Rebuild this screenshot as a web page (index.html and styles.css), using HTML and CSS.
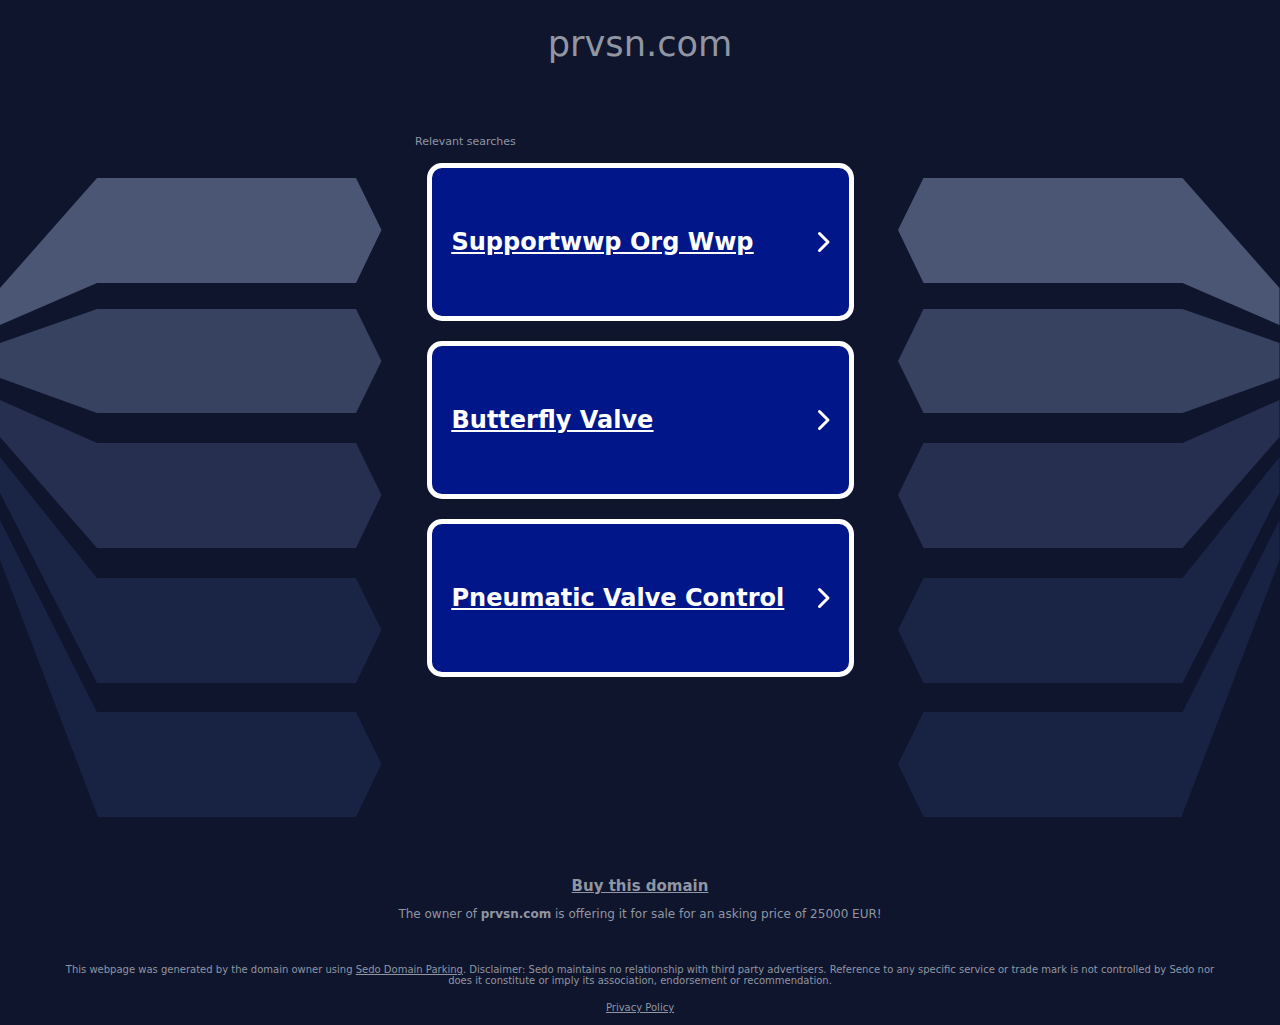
FILE: index.html
```html
<!DOCTYPE html>
<html lang="en">
<head>
  <meta charset="UTF-8" />
  <meta name="viewport" content="width=device-width, initial-scale=1.0" />
  <title>prvsn.com</title>
  <link rel="stylesheet" href="styles.css">
</head>
<body>
  <!-- background shapes -->
  <svg class="backdrop" viewBox="0 0 1280 1025" aria-hidden="true">
    <defs>
      <g id="wing">
        <polygon class="wing-1" points="97,178 356,178 381.5,230 356,283 97,283 0,325 0,288" />
        <polygon class="wing-2" points="97,309 356,309 381.5,361 356,413 97,413 0,378 0,343" />
        <polygon class="wing-3" points="97,443 356,443 381.5,495 356,548 97,548 0,437 0,400" />
        <polygon class="wing-4" points="97,578 356,578 381.5,630 356,683 97,683 0,493 0,457" />
        <polygon class="wing-5" points="97,712 356,712 381.5,764 356,817 98,817 0,560 0,520" />
      </g>
    </defs>
    <use href="#wing" />
    <use href="#wing" transform="translate(1279.5 0) scale(-1 1)" />
  </svg>

  <div class="page">
    <h1 class="domain">prvsn.com</h1>

    <div class="searches">
      <p class="searches-title">Relevant searches</p>
      <a class="search-card" href="#">
        <span class="search-text">Supportwwp Org Wwp</span>
        <svg class="chevron" viewBox="0 0 14 22"><path d="M2.5 2.5 11 11 2.5 19.5" /></svg>
      </a>
      <a class="search-card" href="#">
        <span class="search-text">Butterfly Valve</span>
        <svg class="chevron" viewBox="0 0 14 22"><path d="M2.5 2.5 11 11 2.5 19.5" /></svg>
      </a>
      <a class="search-card" href="#">
        <span class="search-text">Pneumatic Valve Control</span>
        <svg class="chevron" viewBox="0 0 14 22"><path d="M2.5 2.5 11 11 2.5 19.5" /></svg>
      </a>
    </div>

    <div class="sale">
      <a class="sale-link" href="#">Buy this domain</a>
      <p class="sale-text">The owner of <strong>prvsn.com</strong> is offering it for sale for an asking price of 25000 EUR!</p>
    </div>

    <div class="footer">
      <p class="disclaimer">This webpage was generated by the domain owner using <a href="#">Sedo Domain Parking</a>. Disclaimer: Sedo maintains no relationship with third party advertisers. Reference to any specific service or trade mark is not controlled by Sedo nor does it constitute or imply its association, endorsement or recommendation.</p>
      <a class="privacy" href="#">Privacy Policy</a>
    </div>
  </div>
</body>
</html>
```

FILE: styles.css
```css
* {
  box-sizing: border-box;
}

html, body {
  height: 100%;
}

body {
  margin: 0;
  background-color: #0e152d;
  color: #9196a2;
  font-family: "DejaVu Sans", sans-serif;
  overflow: hidden;
}

.backdrop {
  position: absolute;
  top: 0;
  left: 0;
  width: 1280px;
  height: 1025px;
}

.wing-1 { fill: #4a5674; }
.wing-2 { fill: #374160; }
.wing-3 { fill: #262f50; }
.wing-4 { fill: #1a2444; }
.wing-5 { fill: #182242; }

.page {
  position: relative;
  display: flex;
  flex-direction: column;
  align-items: center;
}

.domain {
  margin: 0;
  padding-top: 24px;
  font-size: 35.2px;
  font-weight: normal;
  line-height: 40px;
  text-align: center;
}

.searches {
  width: 450px;
  margin-top: 71px;
  display: flex;
  flex-direction: column;
  align-items: center;
}

.searches-title {
  align-self: flex-start;
  margin: 0 0 15px;
  font-size: 11px;
  line-height: 13px;
}

.search-card {
  width: 427px;
  height: 158px;
  margin-bottom: 20px;
  padding: 0 18px 0 20px;
  display: flex;
  align-items: center;
  justify-content: space-between;
  background-color: #011789;
  border: 5px solid #fff;
  border-radius: 15px;
  color: #fff;
}

.search-text {
  font-size: 24px;
  font-weight: bold;
  line-height: 30px;
  text-decoration: underline;
}

.chevron {
  width: 14px;
  height: 22px;
  fill: none;
  stroke: #fff;
  stroke-width: 3;
  stroke-linecap: round;
  stroke-linejoin: round;
}

.sale {
  margin-top: 179px;
  text-align: center;
}

.sale-link {
  color: #9196a2;
  font-size: 15px;
  font-weight: bold;
  line-height: 20px;
}

.sale-text {
  margin: 11px 0 0;
  font-size: 12px;
  line-height: 14px;
}

.footer {
  width: 1160px;
  margin-top: 43px;
  text-align: center;
  font-size: 10px;
  line-height: 11px;
}

.footer a {
  color: #9196a2;
}

.disclaimer {
  margin: 0 0 16px;
}
```
